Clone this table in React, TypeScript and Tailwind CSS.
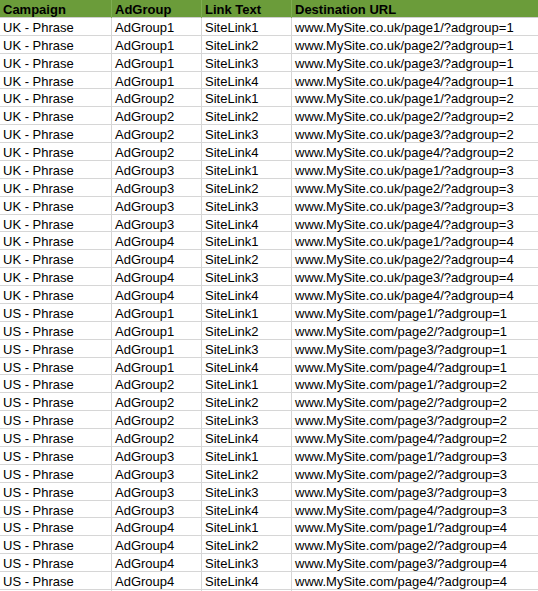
const rows: string[][] = []

for (const country of ["UK", "US"]) {
  const domain = country === "UK" ? "www.MySite.co.uk" : "www.MySite.com"
  for (let g = 1; g <= 4; g++) {
    for (let l = 1; l <= 4; l++) {
      rows.push([
        `${country} - Phrase`,
        `AdGroup${g}`,
        `SiteLink${l}`,
        `${domain}/page${l}/?adgroup=${g}`,
      ])
    }
  }
}

const headers = ["Campaign", "AdGroup", "Link Text", "Destination URL"]
const cols = "grid grid-cols-[112px_90px_90px_1fr]"

export default function App() {
  return (
    <div
      className="w-[538px] h-[591px] overflow-hidden bg-white text-[13px] text-black"
      style={{ fontFamily: '"Liberation Sans", Arial, sans-serif' }}
    >
      {/* header row */}
      <div className={`${cols} h-[17.88px] bg-[#6b9c3a] border-b border-[#cfcfcf] font-bold`}>
        {headers.map((h) => (
          <div key={h} className="pl-[3px] leading-[20px] border-r border-[#7fae52] last:border-r-0 whitespace-nowrap">
            {h}
          </div>
        ))}
      </div>

      {/* data rows */}
      {rows.map((r, i) => (
        <div key={i} className={`${cols} h-[17.88px] border-b border-[#d6d6d6]`}>
          {r.map((c, j) => (
            <div key={j} className="pl-[3px] leading-[19px] border-r border-[#d6d6d6] last:border-r-0 whitespace-nowrap">
              {c}
            </div>
          ))}
        </div>
      ))}
    </div>
  )
}
